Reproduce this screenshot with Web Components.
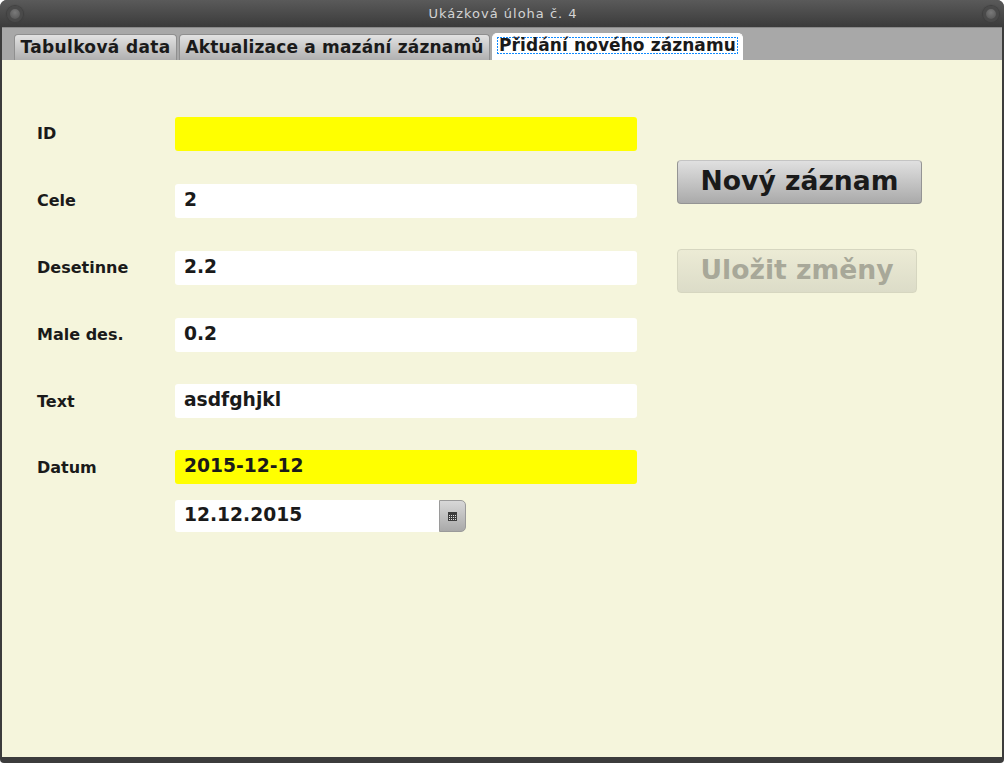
<!DOCTYPE html>
<html>
<head>
<meta charset="utf-8">
<title>Ukázková úloha č. 4</title>
<style>
    html, body { margin: 0; height: 100%; background: #fff; }
    body { font-family: "DejaVu Sans", sans-serif; overflow: hidden; }
</style>
</head>
<body>
<app-window title="Ukázková úloha č. 4">
    <tab-bar>
        <tab-item width="163" style="letter-spacing:.35px">Tabulková data</tab-item>
        <tab-item width="311" style="letter-spacing:.18px">Aktualizace a mazání záznamů</tab-item>
        <tab-item width="251" style="letter-spacing:.09px" selected>Přidání nového záznamu</tab-item>
    </tab-bar>
    <record-form>
        <form-row label="ID" raised highlight></form-row>
        <form-row label="Cele" raised gap="33">2</form-row>
        <form-row label="Desetinne" raised gap="33">2.2</form-row>
        <form-row label="Male des." raised gap="33">0.2</form-row>
        <form-row label="Text" gap="32">asdfghjkl</form-row>
        <form-row label="Datum" gap="32" highlight>2015-12-12</form-row>
        <date-picker>12.12.2015</date-picker>
        <push-button slot="actions" width="245">Nový záznam</push-button>
        <push-button slot="actions" width="240" disabled>Uložit změny</push-button>
    </record-form>
</app-window>

<script>
    class AppWindow extends HTMLElement {
        constructor() {
            super()
            this.attachShadow({ mode: 'open' }).innerHTML = `
            <style>
                :host {
                    display: flex;
                    flex-direction: column;
                    width: 1004px;
                    height: 763px;
                    box-sizing: border-box;
                    background: #3c3c3c;
                    border-radius: 7px 7px 4px 4px;
                    overflow: hidden;
                }
                #bar {
                    height: 27px;
                    flex: none;
                    display: flex;
                    align-items: center;
                    justify-content: space-between;
                    padding: 0 5px 0 7px;
                    box-sizing: border-box;
                    background: linear-gradient(#5a5a5a, #3b3b3b);
                    color: #d4d4d4;
                    font-size: 13px;
                    letter-spacing: 1px;
                }
                .dot {
                    width: 16px;
                    height: 16px;
                    box-sizing: border-box;
                    border-radius: 50%;
                    border: 3px solid #4a4a4a;
                    background: radial-gradient(circle at 50% 35%, #7a7a7a, #525252);
                    box-shadow: 0 0 1px 1px #3f3f3f;
                }
                #body {
                    flex: 1;
                    display: flex;
                    flex-direction: column;
                    margin: 0 2px 6px 2px;
                    min-height: 0;
                }
            </style>
            <div id=bar><span class=dot></span><span id=title></span><span class=dot></span></div>
            <div id=body><slot></slot></div>`
            this.shadowRoot.querySelector('#title').textContent = this.getAttribute('title')
        }
    }
    customElements.define('app-window', AppWindow)

    class TabBar extends HTMLElement {
        constructor() {
            super()
            this.attachShadow({ mode: 'open' }).innerHTML = `
            <style>
                :host {
                    display: flex;
                    align-items: flex-end;
                    gap: 2px;
                    height: 33px;
                    flex: none;
                    box-sizing: border-box;
                    padding: 0 0 0 12px;
                    background: #a8a8a8;
                    border-top: 1px solid #8a8a8a;
                }
            </style>
            <slot></slot>`
        }
    }
    customElements.define('tab-bar', TabBar)

    class TabItem extends HTMLElement {
        constructor() {
            super()
            this.attachShadow({ mode: 'open' }).innerHTML = `
            <style>
                :host {
                    display: flex;
                    align-items: center;
                    justify-content: center;
                    height: 26px;
                    box-sizing: border-box;
                    padding-bottom: 2px;
                    border: 1px solid #8f8f8f;
                    border-bottom: 0;
                    border-radius: 4px 4px 0 0;
                    background: linear-gradient(#e2e2e2, #b0b0b0);
                    color: #1a1a1a;
                    font-size: 17px;
                    font-weight: bold;
                    white-space: nowrap;
                }
                :host([selected]) {
                    height: 27px;
                    padding-bottom: 3px;
                    background: #fff;
                    border-color: #fff;
                    border-radius: 5px 5px 0 0;
                }
                :host([selected]) #t {
                    display: block;
                    box-sizing: border-box;
                    height: 17px;
                    padding: 0 2px;
                    line-height: 17px;
                    background:
                        repeating-linear-gradient(90deg, #0f8aff 0 2px, transparent 2px 3px) top / 100% 1px no-repeat,
                        repeating-linear-gradient(90deg, #0f8aff 0 2px, transparent 2px 3px) bottom / 100% 1px no-repeat,
                        repeating-linear-gradient(#0f8aff 0 2px, transparent 2px 3px) left / 1px 100% no-repeat,
                        repeating-linear-gradient(#0f8aff 0 2px, transparent 2px 3px) right / 1px 100% no-repeat;
                }
            </style>
            <span id=t><slot></slot></span>`
            this.style.width = this.getAttribute('width') + 'px'
        }
    }
    customElements.define('tab-item', TabItem)

    class RecordForm extends HTMLElement {
        constructor() {
            super()
            this.attachShadow({ mode: 'open' }).innerHTML = `
            <style>
                :host {
                    display: flex;
                    flex: 1;
                    min-height: 0;
                    background: #f5f5dc;
                    padding: 57px 0 0 35px;
                    color: #1a1a1a;
                }
                #fields { display: flex; flex-direction: column; width: 600px; flex: none; }
                #actions {
                    display: flex;
                    flex-direction: column;
                    align-items: flex-start;
                    gap: 45px;
                    padding-top: 43px;
                    margin-left: 40px;
                }
            </style>
            <div id=fields><slot></slot></div>
            <div id=actions><slot name=actions></slot></div>`
        }
    }
    customElements.define('record-form', RecordForm)

    class FormRow extends HTMLElement {
        constructor() {
            super()
            this.attachShadow({ mode: 'open' }).innerHTML = `
            <style>
                :host {
                    display: flex;
                    align-items: center;
                    height: 34px;
                    flex: none;
                }
                label {
                    width: 138px;
                    flex: none;
                    font-size: 16px;
                    font-weight: bold;
                }
                :host([raised]) label { padding-bottom: 2px; }
                #box {
                    width: 462px;
                    height: 34px;
                    box-sizing: border-box;
                    padding: 0 9px 4px;
                    display: flex;
                    align-items: center;
                    border-radius: 3px;
                    background: #fff;
                    font-size: 18.7px;
                    font-weight: bold;
                }
                :host([highlight]) #box { background: #ff0; }
            </style>
            <label></label>
            <div id=box><slot></slot></div>`
            this.shadowRoot.querySelector('label').textContent = this.getAttribute('label')
            this.style.marginTop = (this.getAttribute('gap') || 0) + 'px'
        }
    }
    customElements.define('form-row', FormRow)

    class DatePicker extends HTMLElement {
        constructor() {
            super()
            this.attachShadow({ mode: 'open' }).innerHTML = `
            <style>
                :host {
                    display: flex;
                    width: 291px;
                    height: 32px;
                    flex: none;
                    margin: 16px 0 0 138px;
                }
                #box {
                    flex: 1;
                    box-sizing: border-box;
                    padding: 0 9px 4px;
                    display: flex;
                    align-items: center;
                    background: #fff;
                    border-radius: 3px 0 0 3px;
                    font-size: 18.7px;
                    font-weight: bold;
                }
                #btn {
                    width: 27px;
                    flex: none;
                    box-sizing: border-box;
                    display: flex;
                    align-items: center;
                    justify-content: center;
                    border: 1px solid #9a9a9a;
                    border-radius: 0 5px 5px 0;
                    background: linear-gradient(#d8d8d8, #a9a9a9);
                }
                svg { display: block; }
            </style>
            <div id=box><slot></slot></div>
            <div id=btn>
                <svg width="9" height="9" viewBox="0 0 9 9" shape-rendering="crispEdges">
                    <path d="M0 0h9v9H0z" fill="#3c3c3c"/>
                    <path d="M1 3h1v1H1zM3 3h1v1H3zM5 3h1v1H5zM7 3h1v1H7zM1 5h1v1H1zM3 5h1v1H3zM5 5h1v1H5zM7 5h1v1H7zM1 7h1v1H1zM3 7h1v1H3zM5 7h1v1H5zM7 7h1v1H7z" fill="#ddd"/>
                </svg>
            </div>`
        }
    }
    customElements.define('date-picker', DatePicker)

    class PushButton extends HTMLElement {
        constructor() {
            super()
            this.attachShadow({ mode: 'open' }).innerHTML = `
            <style>
                :host {
                    display: flex;
                    align-items: center;
                    justify-content: center;
                    height: 44px;
                    box-sizing: border-box;
                    padding-bottom: 3px;
                    border: 1px solid #949494;
                    border-top-color: #c4c4c4;
                    border-radius: 4px;
                    background: linear-gradient(#e0e0e0, #aaa);
                    color: #1a1a1a;
                    font-size: 26.6px;
                    font-weight: bold;
                    white-space: nowrap;
                }
                :host([disabled]) {
                    border-color: #d6d6c0;
                    background: linear-gradient(#ecebd5, #dcdcc8);
                    color: #a8a899;
                }
            </style>
            <slot></slot>`
            this.style.width = this.getAttribute('width') + 'px'
        }
    }
    customElements.define('push-button', PushButton)
</script>
</body>
</html>
